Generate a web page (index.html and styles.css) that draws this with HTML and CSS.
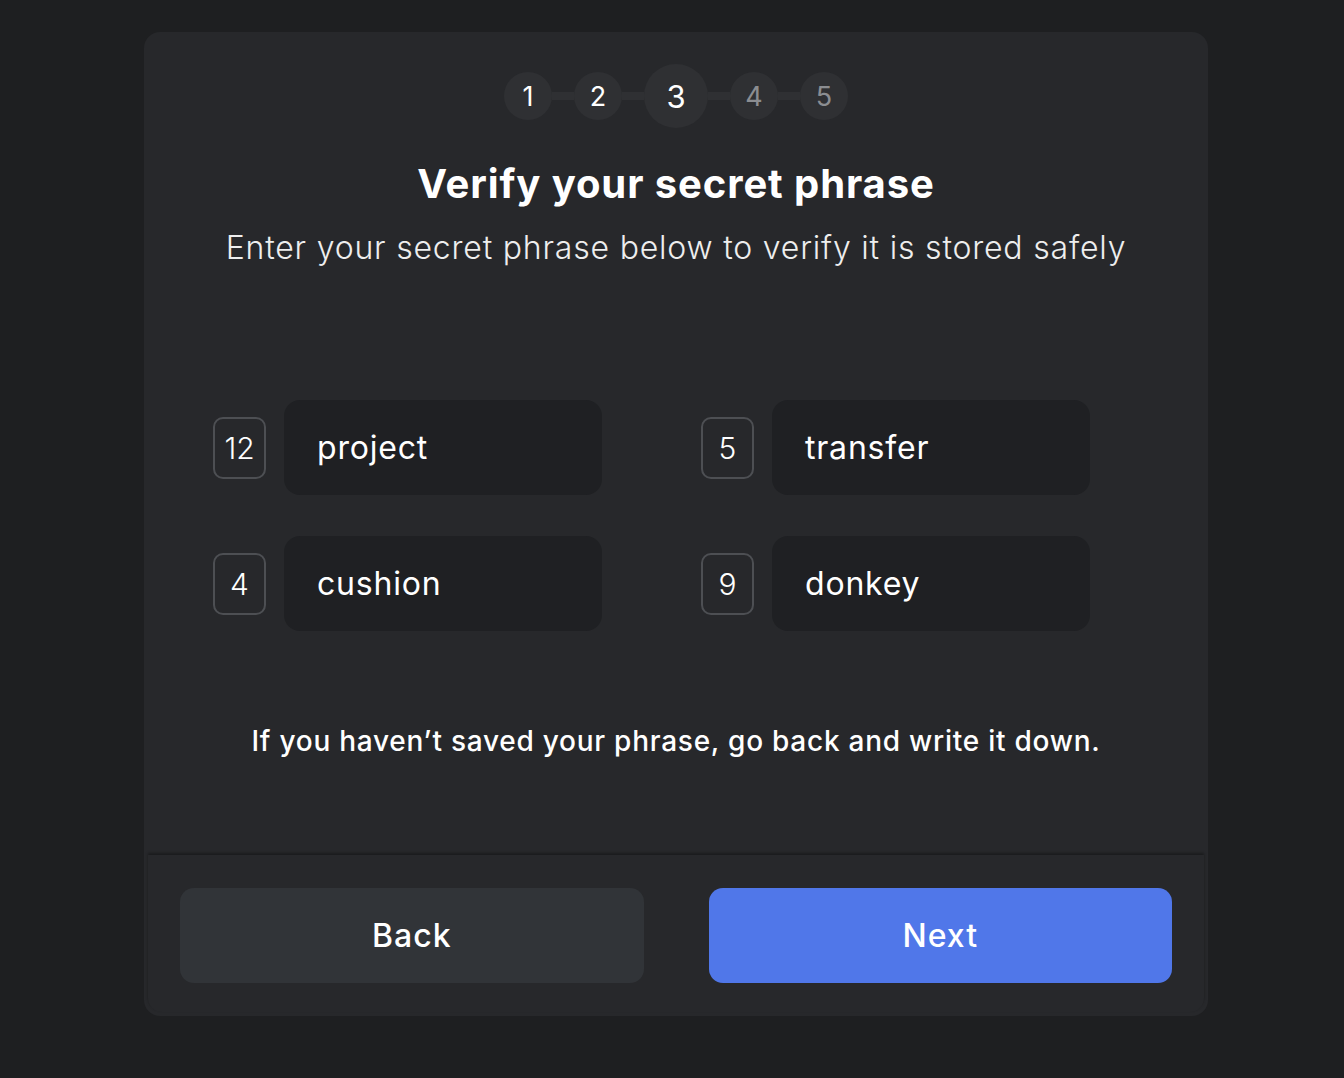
FILE: index.html
```html
<!DOCTYPE html>
<html>
<head>
<meta charset="utf-8">
<link rel="stylesheet" href="styles.css">
</head>
<body>
<div class="card">
  <div class="content">
    <div class="steps">
      <div class="step done">1</div>
      <div class="bar"></div>
      <div class="step done">2</div>
      <div class="bar"></div>
      <div class="step current">3</div>
      <div class="bar"></div>
      <div class="step todo">4</div>
      <div class="bar"></div>
      <div class="step todo">5</div>
    </div>
    <h1 class="title">Verify your secret phrase</h1>
    <p class="subtitle">Enter your secret phrase below to verify it is stored safely</p>
    <div class="words">
      <div class="word"><span class="num">12</span><div class="input">project</div></div>
      <div class="word"><span class="num">5</span><div class="input">transfer</div></div>
      <div class="word"><span class="num">4</span><div class="input">cushion</div></div>
      <div class="word"><span class="num">9</span><div class="input">donkey</div></div>
    </div>
    <p class="hint">If you haven’t saved your phrase, go back and write it down.</p>
  </div>
  <div class="footer">
    <button class="btn back">Back</button>
    <button class="btn next">Next</button>
  </div>
</div>
</body>
</html>
```
FILE: styles.css
```css
html, body {
  margin: 0;
  padding: 0;
  background: #1e1f21;
  font-family: Inter, "Noto Sans", sans-serif;
  color: #ffffff;
}
.card {
  width: 1064px;
  height: 984px;
  margin: 32px 0 0 144px;
  background: #27282b;
  border-radius: 16px;
  display: flex;
  flex-direction: column;
  box-sizing: border-box;
  padding: 0 4px 4px 4px;
}
.content {
  flex: 1;
  padding-top: 32px;
  display: flex;
  flex-direction: column;
  align-items: center;
}
.steps {
  display: flex;
  align-items: center;
  height: 64px;
}
.step {
  width: 48px;
  height: 48px;
  border-radius: 50%;
  background: #2f3033;
  display: flex;
  align-items: center;
  justify-content: center;
  font-size: 27px;
  font-weight: 400;
}
.step.current {
  width: 64px;
  height: 64px;
  font-size: 31px;
}
.step.todo { color: #8b8d91; }
.bar {
  width: 22px;
  height: 8px;
  background: #2f3033;
}
.title {
  margin: 34px 0 0 0;
  font-size: 40px;
  font-weight: 700;
  line-height: 44px;
  letter-spacing: 0.9px;
}
.subtitle {
  margin: 22px 0 0 0;
  font-size: 32px;
  font-weight: 300;
  line-height: 40px;
  letter-spacing: 0.8px;
  color: #eeeeee;
}
.words {
  align-self: flex-start;
  margin: 132px 0 0 65px;
  display: grid;
  grid-template-columns: 389px 389px;
  column-gap: 99px;
  row-gap: 41px;
}
.word {
  display: flex;
  align-items: center;
  gap: 18px;
}
.num {
  width: 53px;
  height: 62px;
  box-sizing: border-box;
  border: 2px solid #4d4f53;
  border-radius: 10px;
  display: flex;
  align-items: center;
  justify-content: center;
  font-size: 30px;
  font-weight: 300;
}
.input {
  width: 318px;
  height: 95px;
  box-sizing: border-box;
  background: #1f2023;
  border-radius: 16px;
  padding-left: 33px;
  display: flex;
  align-items: center;
  font-size: 32px;
  font-weight: 400;
  letter-spacing: 0.8px;
}
.hint {
  margin: 92px 0 0 0;
  font-size: 28px;
  font-weight: 500;
  line-height: 36px;
  letter-spacing: 0.75px;
}
.footer {
  height: 157px;
  background: #27282b;
  box-shadow: 0 -2px 3px rgba(0, 0, 0, 0.35);
  border-radius: 0 0 14px 14px;
  display: flex;
  align-items: flex-start;
  padding: 33px 32px 0 32px;
  gap: 65px;
  box-sizing: border-box;
}
.btn {
  flex: 1;
  height: 95px;
  border: none;
  border-radius: 14px;
  font-family: Inter, "Noto Sans", sans-serif;
  font-size: 32px;
  font-weight: 500;
  letter-spacing: 1px;
  color: #ffffff;
}
.btn.back { background: #313438; }
.btn.next { background: #5077e9; }
```
